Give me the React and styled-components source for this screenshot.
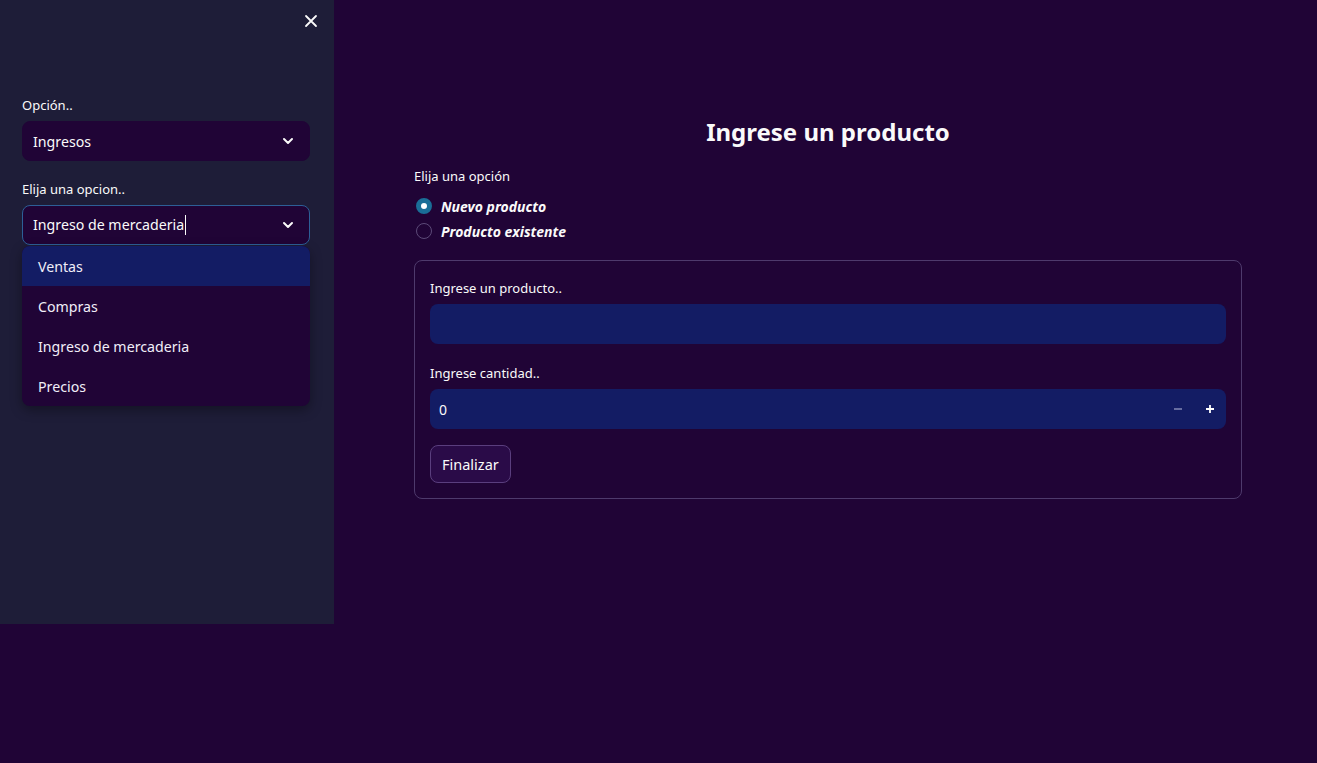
import styled, { createGlobalStyle } from "styled-components";

const GlobalStyle = createGlobalStyle`
  html, body {
    margin: 0;
    padding: 0;
    background: #200436;
    font-family: "Noto Sans", "Open Sans", sans-serif;
    color: #fafafa;
  }
`;

const bodyFont = `"Noto Sans", "Open Sans", sans-serif`;

export default function App() {
  return (
    <Page>
      <GlobalStyle />
      <Sidebar>
        <CloseButton>
          <svg width="14" height="14" viewBox="0 0 14 14">
            <path d="M2 2L12 12M12 2L2 12" stroke="#fafafa" strokeWidth="1.8" strokeLinecap="round" />
          </svg>
        </CloseButton>

        <Field>
          <Label>Opción..</Label>
          <Select>
            <span>Ingresos</span>
            <Chevron />
          </Select>
        </Field>

        <Field>
          <Label>Elija una opcion..</Label>
          <SelectWrap>
            <Select focused>
              <span>
                Ingreso de mercaderia<Caret />
              </span>
              <Chevron />
            </Select>
            <Menu>
              {["Ventas", "Compras", "Ingreso de mercaderia", "Precios"].map((o, i) => (
                <MenuItem key={o} active={i === 0}>
                  {o}
                </MenuItem>
              ))}
            </Menu>
          </SelectWrap>
        </Field>
      </Sidebar>

      <Main>
        <Title>Ingrese un producto</Title>
        <SmallLabel>Elija una opción</SmallLabel>
        <RadioGroup>
          <RadioRow>
            <Radio checked />
            <RadioText>Nuevo producto</RadioText>
          </RadioRow>
          <RadioRow>
            <Radio />
            <RadioText>Producto existente</RadioText>
          </RadioRow>
        </RadioGroup>

        <Form>
          <Label>Ingrese un producto..</Label>
          <TextInput />
          <Label>Ingrese cantidad..</Label>
          <NumberInput>
            <span>0</span>
            <Steppers>
              <StepButton dim>
                <svg width="10" height="10" viewBox="0 0 10 10">
                  <path d="M1 5H9" stroke="currentColor" strokeWidth="1.6" />
                </svg>
              </StepButton>
              <StepButton>
                <svg width="10" height="10" viewBox="0 0 10 10">
                  <path d="M1 5H9M5 1V9" stroke="currentColor" strokeWidth="1.8" />
                </svg>
              </StepButton>
            </Steppers>
          </NumberInput>
          <Button>Finalizar</Button>
        </Form>
      </Main>
    </Page>
  );
}

function Chevron() {
  return (
    <svg width="12" height="8" viewBox="0 0 12 8">
      <path d="M2 2L6 6L10 2" stroke="#fafafa" strokeWidth="2" fill="none" strokeLinecap="round" strokeLinejoin="round" />
    </svg>
  );
}

const Page = styled.div`
  display: flex;
  align-items: flex-start;
  width: 100%;
  min-height: 763px;
  background: #200436;
`;

const Sidebar = styled.aside`
  box-sizing: border-box;
  width: 334px;
  height: 624px;
  flex-shrink: 0;
  background: #1e1d38;
  padding: 0 24px 0 22px;
  display: flex;
  flex-direction: column;
`;

const CloseButton = styled.div`
  display: flex;
  justify-content: flex-end;
  padding: 14px 0 0;
  height: 56px;
  margin-right: -8px;
`;

const Field = styled.div`
  display: flex;
  flex-direction: column;
  margin-top: 26px;

  & + & {
    margin-top: 19px;
  }
`;

const Label = styled.div`
  font-family: ${bodyFont};
  font-size: 13px;
  color: #fafafa;
  line-height: 18px;
  margin-bottom: 7px;
`;

const SelectWrap = styled.div`
  position: relative;
`;

const Select = styled.div`
  box-sizing: border-box;
  height: 40px;
  display: flex;
  align-items: center;
  justify-content: space-between;
  padding: 0 15px 0 10px;
  background: #200436;
  border-radius: 8px;
  border: 1px solid ${({ focused }) => (focused ? "#2d5f97" : "#200436")};
  font-family: ${bodyFont};
  font-size: 14.2px;
  color: #fafafa;
`;

const Caret = styled.span`
  display: inline-block;
  width: 1px;
  height: 20px;
  background: #fafafa;
  vertical-align: -5px;
  margin-left: 1px;
`;

const Menu = styled.div`
  position: absolute;
  top: 41px;
  left: 0;
  right: 0;
  background: #200436;
  border-radius: 8px;
  overflow: hidden;
  box-shadow: 0 4px 12px rgba(0, 0, 0, 0.35);
`;

const MenuItem = styled.div`
  height: 40px;
  display: flex;
  align-items: center;
  padding-left: 16px;
  font-family: ${bodyFont};
  font-size: 14.2px;
  color: #f0eef8;
  background: ${({ active }) => (active ? "#131c64" : "transparent")};
`;

const Main = styled.main`
  flex: 1;
  box-sizing: border-box;
  padding: 110px 75px 0 80px;
  display: flex;
  flex-direction: column;
`;

const Title = styled.h2`
  margin: 0 0 13px;
  text-align: center;
  font-family: ${bodyFont};
  font-weight: 700;
  font-size: 24px;
  line-height: 44px;
  color: #fafafa;
`;

const SmallLabel = styled(Label)`
  margin-bottom: 11px;
`;

const RadioGroup = styled.div`
  display: flex;
  flex-direction: column;
  gap: 5px;
  margin-bottom: 19px;
`;

const RadioRow = styled.div`
  display: flex;
  align-items: center;
  gap: 9px;
  height: 20px;
  padding-left: 2px;
`;

const Radio = styled.span`
  box-sizing: border-box;
  width: 16px;
  height: 16px;
  border-radius: 50%;
  border: ${({ checked }) => (checked ? "5px solid #1a6e97" : "1px solid #5c4a78")};
  background: ${({ checked }) => (checked ? "#ffffff" : "transparent")};
`;

const RadioText = styled.span`
  font-family: ${bodyFont};
  font-style: italic;
  font-weight: 700;
  font-size: 14px;
  color: #fafafa;
`;

const Form = styled.div`
  box-sizing: border-box;
  border: 1px solid #4e3a6c;
  border-radius: 8px;
  padding: 18px 15px 15px;
  display: flex;
  flex-direction: column;
  align-items: stretch;
`;

const TextInput = styled.div`
  height: 40px;
  border-radius: 8px;
  background: #131c64;
  margin-bottom: 20px;
`;

const NumberInput = styled.div`
  box-sizing: border-box;
  height: 40px;
  border-radius: 8px;
  background: #131c64;
  display: flex;
  align-items: center;
  justify-content: space-between;
  padding-left: 9px;
  font-family: ${bodyFont};
  font-size: 14px;
  color: #fafafa;
  margin-bottom: 16px;
`;

const Steppers = styled.div`
  display: flex;
  height: 100%;
`;

const StepButton = styled.div`
  width: 32px;
  height: 100%;
  display: flex;
  align-items: center;
  justify-content: center;
  color: ${({ dim }) => (dim ? "#7d82b0" : "#ffffff")};
`;

const Button = styled.button`
  align-self: flex-start;
  box-sizing: border-box;
  height: 38px;
  padding: 0 11px;
  border-radius: 8px;
  border: 1px solid #5a3e7e;
  background: #2a0b48;
  color: #fafafa;
  font-family: ${bodyFont};
  font-size: 14.5px;
`;
